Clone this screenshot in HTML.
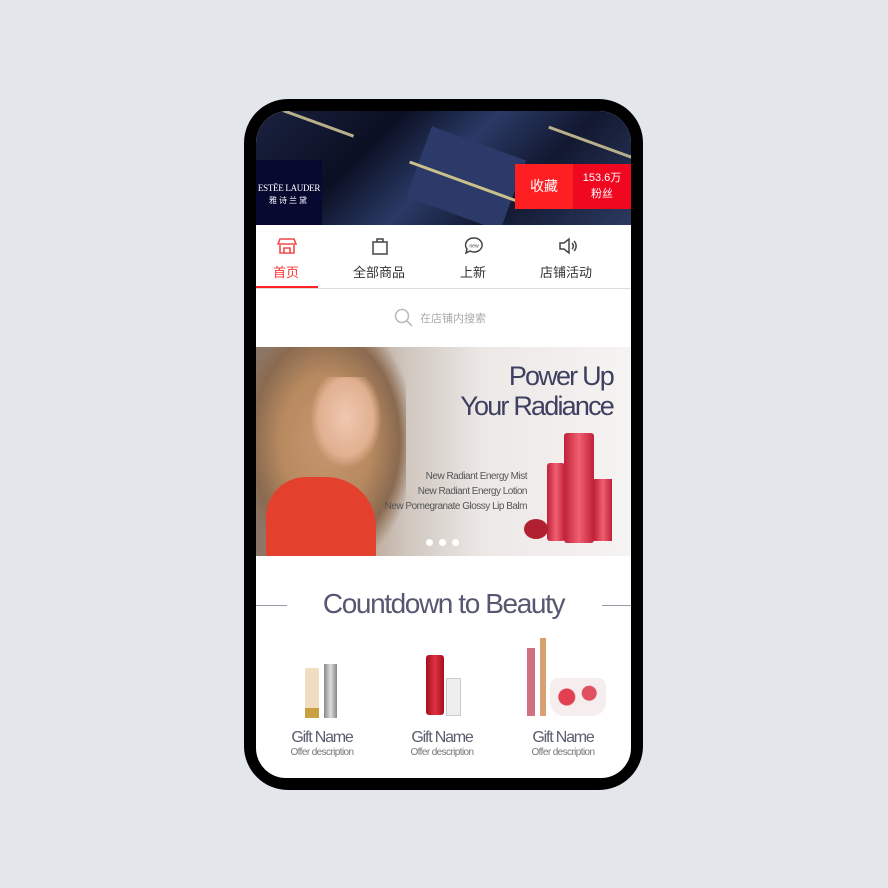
<!DOCTYPE html>
<html><head><meta charset="utf-8"><style>
*{margin:0;padding:0;box-sizing:border-box}
body{width:888px;height:888px;background:#e3e7ec;position:relative;overflow:hidden;font-family:"Liberation Sans","Noto Sans CJK SC",sans-serif}
.phone{position:absolute;left:244px;top:99px;width:399px;height:691px;background:#000;border-radius:44px}
.screen{position:absolute;left:256px;top:111px;width:375px;height:667px;background:#fff;border-radius:32px 32px 30px 30px;overflow:hidden}
.abs{position:absolute}
.hdr{left:0;top:0;width:375px;height:114px;overflow:hidden;background:linear-gradient(135deg,#1a2240 0%,#0b0f22 30%,#2a3a66 50%,#121830 70%,#2c3a60 100%)}
.box{background:#2b3a68;transform:rotate(20deg)}
.tab{position:absolute;top:140px;font-size:13px;color:#333;text-align:center}
.name{font-family:"Liberation Sans",sans-serif;font-size:16px;color:#5a5e6e;letter-spacing:-1.2px;text-align:center;width:110px}
.desc{font-size:10px;color:#777;letter-spacing:-.6px;text-align:center;width:110px}
</style></head><body>
<div class="phone"></div>
<div class="screen">
 <div class="abs hdr">
 <div class="abs box" style="left:160px;top:30px;width:100px;height:75px;"></div>
 <div class="abs" style="left:150px;top:70px;width:120px;height:3px;background:#c9c08a;transform:rotate(20deg)"></div>
 <div class="abs" style="left:290px;top:30px;width:90px;height:3px;background:#b8b08a;transform:rotate(20deg)"></div>
 <div class="abs" style="left:20px;top:10px;width:80px;height:3px;background:#b8b08a;transform:rotate(20deg)"></div>
 </div>
 <div class="abs" style="left:0;top:49px;width:66px;height:65px;background:#070930;color:#fff;text-align:center">
  <div style="font-family:'Liberation Serif',serif;font-size:9px;margin-top:23px;letter-spacing:-.3px">ESTĒE LAUDER</div>
  <div style="font-size:8px;margin-top:2px;letter-spacing:2px">雅诗兰黛</div></div>
 <div class="abs" style="left:259px;top:53px;width:58px;height:45px;background:#fe1f22;color:#fff;font-size:14px;text-align:center;line-height:45px">收藏</div>
 <div class="abs" style="left:317px;top:53px;width:58px;height:45px;background:#f00820;color:#fff;font-size:11px;text-align:center;line-height:16px;padding-top:6px">153.6万<br>粉丝</div>
 <svg class="abs" style="left:21px;top:126px" width="20" height="18" viewBox="0 0 20 18" fill="none" stroke="#f24848" stroke-width="1.6"><path d="M3 2h14l2 5H1z"/><path d="M3 8v8h14V8"/><path d="M7 16v-5h6v5"/></svg>
 <div class="tab" style="left:17px;color:#f33;top:151px">首页</div>
 <svg class="abs" style="left:115px;top:125px" width="18" height="20" viewBox="0 0 18 20" fill="none" stroke="#444" stroke-width="1.5"><path d="M2 6h14v12H2z"/><path d="M6 6V3h6v3"/></svg>
 <div class="tab" style="left:97px;top:151px">全部商品</div>
 <svg class="abs" style="left:208px;top:125px" width="20" height="20" viewBox="0 0 20 20" fill="none" stroke="#444" stroke-width="1.5"><path d="M10 2a8 7 0 1 1-4 13l-4 2 1-4A8 7 0 0 1 10 2z"/><text x="10" y="11.5" font-size="5" fill="#444" stroke="none" text-anchor="middle" font-family="Liberation Sans">new</text></svg>
 <div class="tab" style="left:204px;top:151px">上新</div>
 <svg class="abs" style="left:302px;top:126px" width="20" height="18" viewBox="0 0 20 18" fill="none" stroke="#444" stroke-width="1.5"><path d="M2 6h4l5-4v14l-5-4H2z"/><path d="M14 6a4 4 0 0 1 0 6M16 4a7 7 0 0 1 0 10"/></svg>
 <div class="tab" style="left:284px;top:151px">店铺活动</div>
 <div class="abs" style="left:0;top:175px;width:62px;height:3px;background:#f22"></div>
 <div class="abs" style="left:0;top:177px;width:375px;height:1px;background:#ddd"></div>
 <svg class="abs" style="left:138px;top:197px" width="20" height="20" viewBox="0 0 20 20" fill="none" stroke="#bbb" stroke-width="1.6"><circle cx="8" cy="8" r="6.5"/><path d="M13 13l5 5"/></svg>
 <div class="abs" style="left:164px;top:199px;font-size:11px;color:#aaa">在店铺内搜索</div>
 <div class="abs" style="left:0;top:236px;width:375px;height:209px;overflow:hidden;background:linear-gradient(90deg,#8a7466 0%,#b59a86 25%,#cfc6be 40%,#ece8e6 60%,#f6f3f3 100%)">
  <div class="abs" style="left:-10px;top:0;width:160px;height:209px;background:radial-gradient(ellipse at 50% 45%,#c89670 0%,#b88a60 40%,#8a6a50 65%,transparent 80%)"></div>
  <div class="abs" style="left:55px;top:30px;width:70px;height:90px;background:radial-gradient(ellipse at 50% 45%,#f0c8b0 0%,#e0b090 55%,transparent 72%)"></div>
  <div class="abs" style="left:10px;top:130px;width:110px;height:80px;background:#e4402e;border-radius:40px 50px 0 0"></div>
 </div>
 <div class="abs" style="left:150px;top:250px;width:207px;text-align:right;font-size:27px;color:#3e4060;line-height:30px;letter-spacing:-1.8px">Power Up<br>Your Radiance</div>
 <div class="abs" style="left:100px;top:358px;width:171px;text-align:right;font-size:10px;color:#555;line-height:15px;letter-spacing:-.5px">New Radiant Energy Mist<br>New Radiant Energy Lotion<br>New Pomegranate Glossy Lip Balm</div>
 <div class="abs" style="left:308px;top:322px;width:30px;height:110px;background:linear-gradient(90deg,#c0203a,#f06070,#c0203a);border-radius:3px"></div>
 <div class="abs" style="left:291px;top:352px;width:18px;height:78px;background:linear-gradient(90deg,#c0203a,#f06070,#c0203a);border-radius:3px"></div>
 <div class="abs" style="left:338px;top:368px;width:18px;height:62px;background:linear-gradient(90deg,#c0203a,#f06070,#c0203a)"></div>
 <div class="abs" style="left:268px;top:408px;width:24px;height:20px;background:#b02030;border-radius:50%"></div>
 <div class="abs" style="left:170px;top:428px;width:7px;height:7px;background:#fff;border-radius:50%"></div>
 <div class="abs" style="left:183px;top:428px;width:7px;height:7px;background:#fff;border-radius:50%"></div>
 <div class="abs" style="left:196px;top:428px;width:7px;height:7px;background:#fff;border-radius:50%"></div>
 <div class="abs" style="left:0;top:494px;width:31px;height:1px;background:#9a9aaa"></div>
 <div class="abs" style="left:346px;top:494px;width:29px;height:1px;background:#9a9aaa"></div>
 <div class="abs" style="left:0;top:477px;width:375px;text-align:center;font-size:28px;color:#555870;letter-spacing:-1.4px">Countdown to Beauty</div>
 <div class="abs" style="left:49px;top:557px;width:14px;height:50px;background:#f0dcc0;border-radius:2px"></div>
 <div class="abs" style="left:49px;top:597px;width:14px;height:10px;background:#c9a040"></div>
 <div class="abs" style="left:68px;top:553px;width:13px;height:54px;background:linear-gradient(90deg,#888,#ddd,#888)"></div>
 <div class="abs" style="left:170px;top:544px;width:18px;height:60px;background:linear-gradient(90deg,#a01020,#e03040,#a01020);border-radius:3px"></div>
 <div class="abs" style="left:190px;top:567px;width:15px;height:38px;background:#eee;border:1px solid #ccc"></div>
 <div class="abs" style="left:271px;top:537px;width:8px;height:68px;background:#d07080"></div>
 <div class="abs" style="left:284px;top:527px;width:6px;height:78px;background:#d8a070"></div>
 <div class="abs" style="left:294px;top:567px;width:56px;height:38px;background:radial-gradient(circle at 30% 50%,#e04050 0 8px,transparent 9px),radial-gradient(circle at 70% 40%,#e05060 0 7px,transparent 8px),#f6eeee;border-radius:8px 8px 14px 14px"></div>
 <div class="abs name" style="left:11px;top:618px">Gift Name</div>
 <div class="abs desc" style="left:11px;top:636px">Offer description</div>
 <div class="abs name" style="left:131px;top:618px">Gift Name</div>
 <div class="abs desc" style="left:131px;top:636px">Offer description</div>
 <div class="abs name" style="left:252px;top:618px">Gift Name</div>
 <div class="abs desc" style="left:252px;top:636px">Offer description</div>
</div>
</body></html>
